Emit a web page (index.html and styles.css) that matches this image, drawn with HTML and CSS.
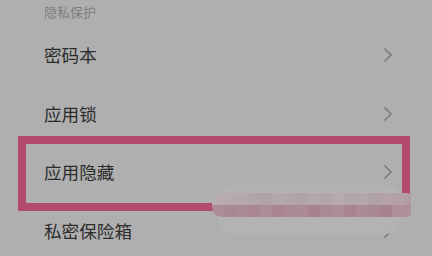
FILE: index.html
```html
<!DOCTYPE html>
<html>
<head>
<meta charset="utf-8">
<link rel="stylesheet" href="styles.css">
</head>
<body>
<div class="screen">
  <div class="section-title">隐私保护</div>
  <div class="list">
    <div class="row"><span class="label">密码本</span><svg class="chev" width="10" height="16" viewBox="0 0 10 16"><path d="M1.5 1.5 L8 8 L1.5 14.5" fill="none" stroke="#7c7c7c" stroke-width="1.6"/></svg></div>
    <div class="row"><span class="label">应用锁</span><svg class="chev" width="10" height="16" viewBox="0 0 10 16"><path d="M1.5 1.5 L8 8 L1.5 14.5" fill="none" stroke="#7c7c7c" stroke-width="1.6"/></svg></div>
    <div class="row"><span class="label">应用隐藏</span><svg class="chev" width="10" height="16" viewBox="0 0 10 16"><path d="M1.5 1.5 L8 8 L1.5 14.5" fill="none" stroke="#7c7c7c" stroke-width="1.6"/></svg></div>
    <div class="row"><span class="label">私密保险箱</span><svg class="chev" width="10" height="16" viewBox="0 0 10 16"><path d="M1.5 1.5 L8 8 L1.5 14.5" fill="none" stroke="#7c7c7c" stroke-width="1.6"/></svg></div>
  </div>
  <div class="highlight"></div>
  <div class="toast"></div>
  <div class="mosaic">
    <i style="background:#b9abb1"></i><i style="background:#b7a9af"></i><i style="background:#b6a8ae"></i><i style="background:#b3a4aa"></i><i style="background:#b0a2a8"></i><i style="background:#b5a7ad"></i><i style="background:#b3a5ab"></i><i style="background:#b1a3a9"></i><i style="background:#b4a6ac"></i><i style="background:#b2a4aa"></i><i style="background:#b7a9af"></i><i style="background:#b3a5ab"></i><i style="background:#b4a6ac"></i><i style="background:#b1a2a9"></i><i style="background:#b5a3aa"></i><i style="background:#b4a0a8"></i><i style="background:#b39ca5"></i>
    <i style="background:#ad8d99"></i><i style="background:#a98794"></i><i style="background:#ab8a96"></i><i style="background:#a98692"></i><i style="background:#ad8d99"></i><i style="background:#a88591"></i><i style="background:#ab8a96"></i><i style="background:#ac8b97"></i><i style="background:#a7838f"></i><i style="background:#ab8995"></i><i style="background:#ad8d99"></i><i style="background:#a88490"></i><i style="background:#ac8b97"></i><i style="background:#aa8894"></i><i style="background:#a7828f"></i><i style="background:#ae8f9a"></i><i style="background:#b08f9b"></i>
  </div>
</div>
</body>
</html>
```
FILE: styles.css
```css
html, body {
  margin: 0;
  padding: 0;
}
body {
  background: #afafaf;
  font-family: "Noto Sans CJK SC", "Noto Sans", sans-serif;
}
.screen {
  position: relative;
  width: 432px;
  height: 256px;
  overflow: hidden;
  background: #afafaf;
}
.section-title {
  height: 26px;
  padding-left: 44px;
  font-size: 13px;
  line-height: 24px;
  color: #7e7e7e;
}
.list {
  display: flex;
  flex-direction: column;
}
.row {
  height: 58.5px;
  display: flex;
  align-items: center;
  justify-content: space-between;
  padding-left: 44px;
  padding-right: 39px;
  flex-shrink: 0;
}
.label {
  font-size: 17.6px;
  color: #2c2c2c;
  line-height: 20px;
}
.chev {
  display: block;
}
.highlight {
  position: absolute;
  left: 18px;
  top: 136px;
  width: 376px;
  height: 59px;
  border: 8px solid #b24b6d;
}
.toast {
  position: absolute;
  left: 218px;
  top: 185px;
  width: 182px;
  height: 49px;
  border-radius: 14px;
  background: rgba(180, 180, 180, 0.93);
}
.mosaic {
  position: absolute;
  left: 212px;
  top: 193px;
  width: 199px;
  height: 24px;
  display: grid;
  grid-template-columns: repeat(17, 12px);
  grid-template-rows: 12px 12px;
  overflow: hidden;
  border-radius: 10px 4px 4px 10px;
}
.mosaic i {
  display: block;
}
```
